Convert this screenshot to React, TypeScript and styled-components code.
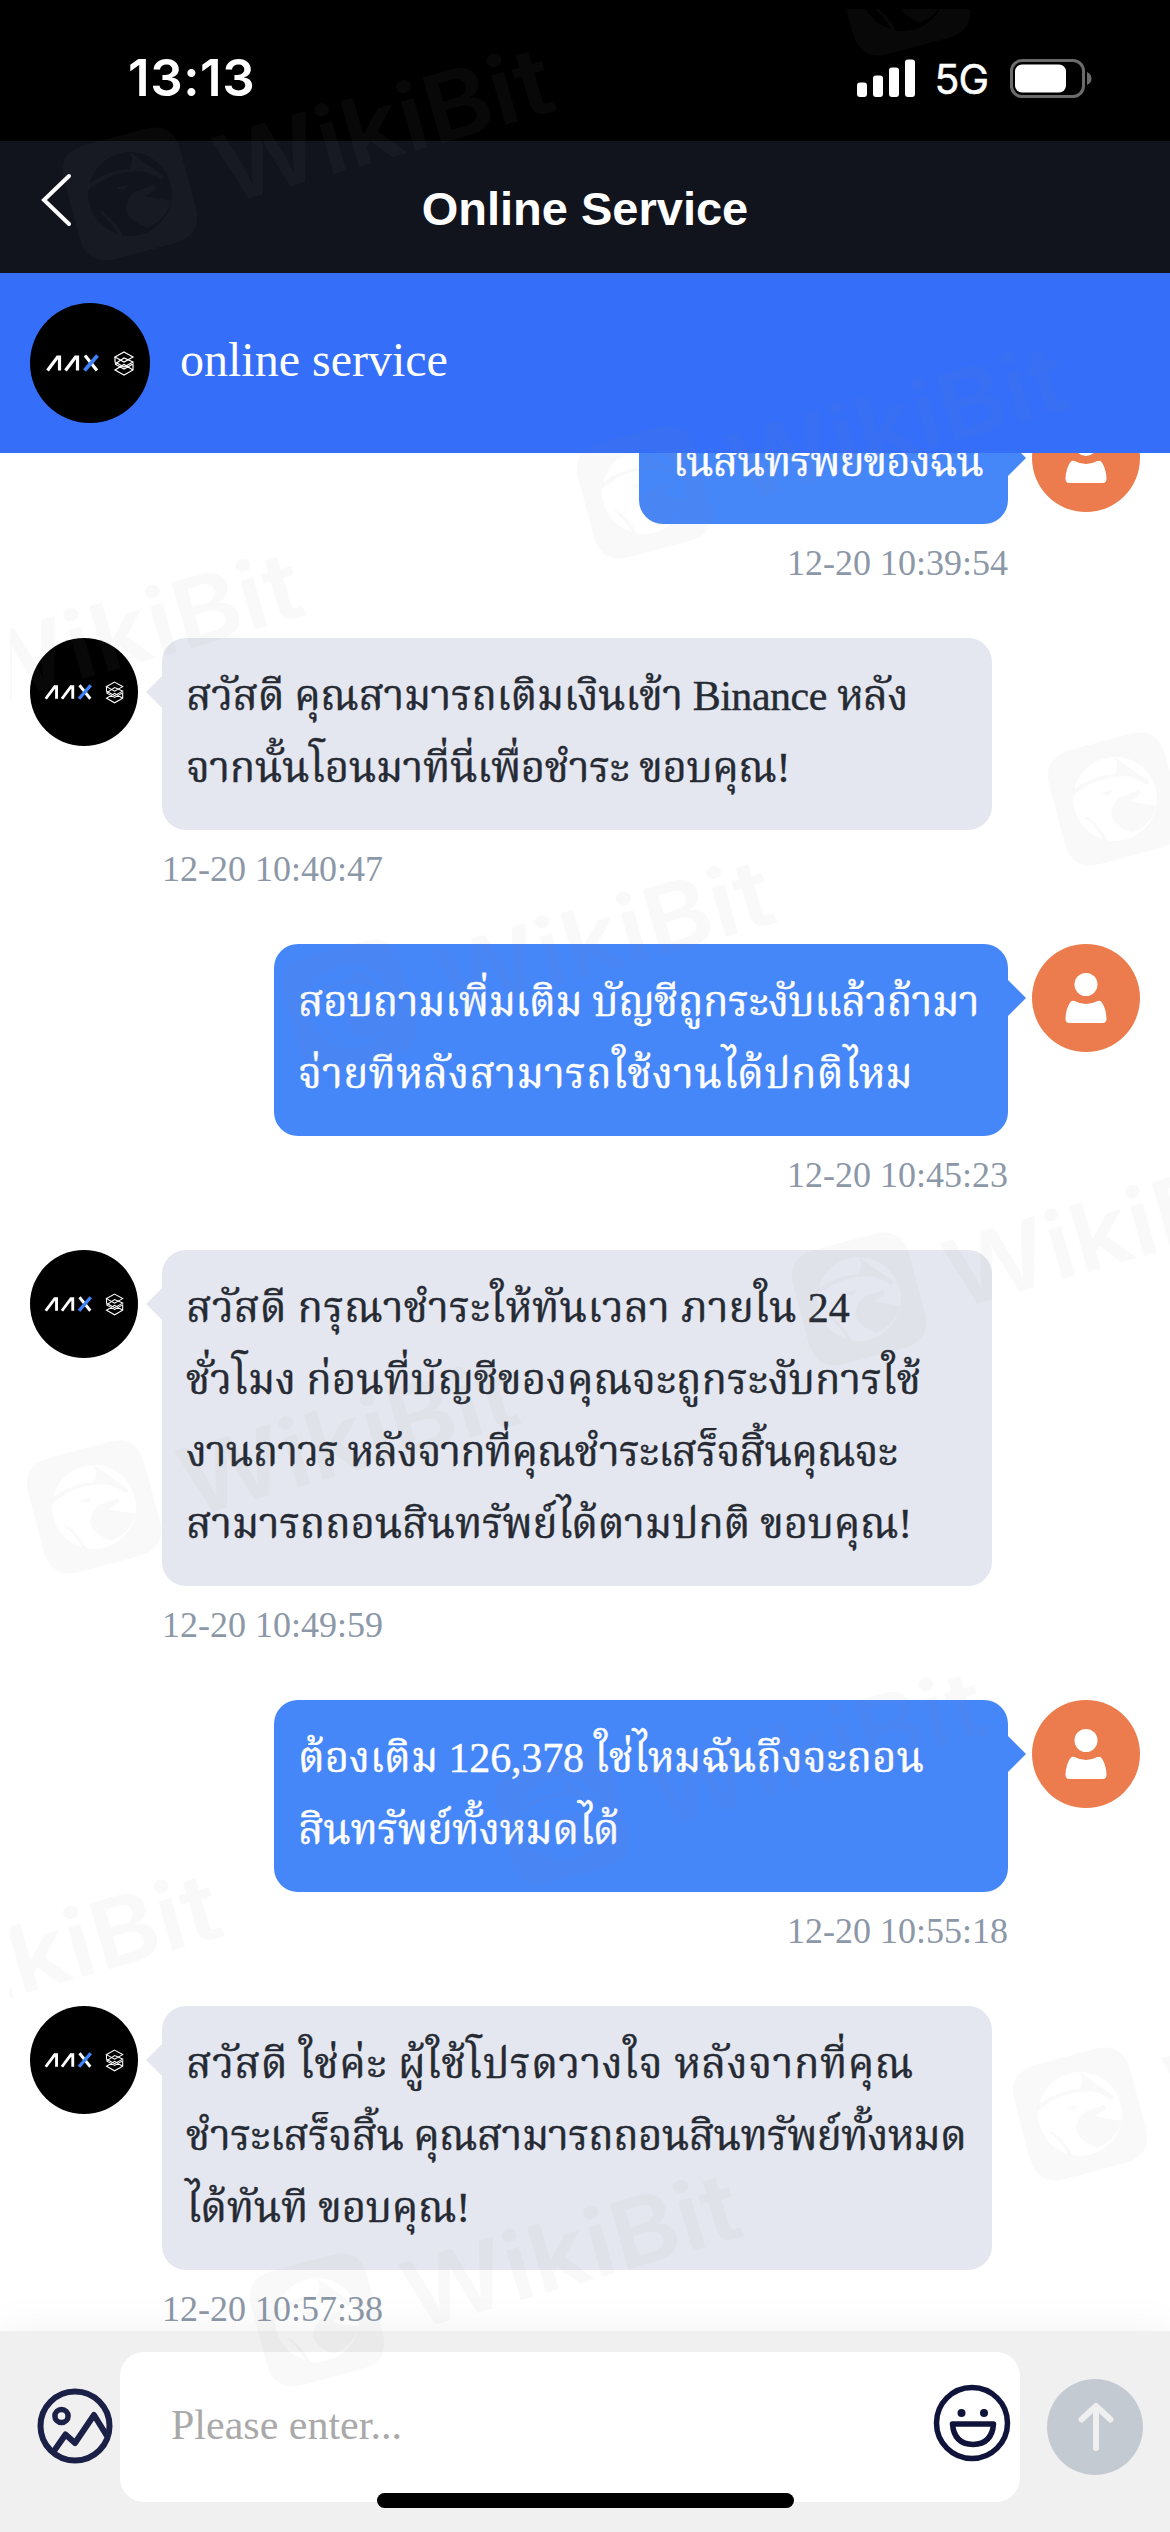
import React, { useLayoutEffect, useRef, useState } from "react";
import styled, { createGlobalStyle, css } from "styled-components";

const serif = `"Liberation Serif", "Times New Roman", "Noto Serif Thai", "Noto Sans Thai", "Loma", serif`;

const GlobalStyle = createGlobalStyle`
  body { margin: 0; background: #fff; }
  * { box-sizing: border-box; }
`;

const Phone = styled.div`
  position: relative;
  display: flex;
  flex-direction: column;
  width: 1170px;
  height: 2532px;
  overflow: hidden;
  background: #fff;
  font-family: ${serif};
`;

const StatusBar = styled.div`
  display: flex;
  flex: none;
  justify-content: space-between;
  align-items: flex-start;
  height: 141px;
  padding: 49px 78px 0 128px;
  background: #000;
  color: #fff;
  font-family: Inter, sans-serif;
`;

const Clock = styled.span`
  font-size: 51px;
  line-height: 58px;
  font-weight: 600;
  letter-spacing: 0.6px;
`;

const Indicators = styled.div`
  display: flex;
  align-items: center;
  height: 58px;
`;

const Network = styled.span`
  margin: 1px 22px 0 19px;
  font-size: 41px;
  line-height: 56px;
  letter-spacing: -1px;
  -webkit-text-stroke: 0.5px currentColor;
`;

const NavBar = styled.header`
  display: grid;
  flex: none;
  grid-template-columns: 120px 1fr 120px;
  align-items: center;
  height: 132px;
  background: #11141d;
  color: #fff;
`;

const BackIcon = styled.svg`
  width: 32px;
  height: 56px;
  margin: -14px 0 0 41px;
`;

const Title = styled.h1`
  margin: 3px 0 0;
  text-align: center;
  font: 700 47px/60px "Liberation Sans", Arial, sans-serif;
`;

const AgentBar = styled.div`
  display: flex;
  flex: none;
  align-items: center;
  gap: 30px;
  height: 180px;
  padding: 0 30px;
  background: #346ef9;
  color: #fff;
  font-size: 48px;
`;

const AgentName = styled.span`
  margin-top: -8px;
`;

const Avatar = styled.div<{ $size: number; $color: string }>`
  display: flex;
  flex: none;
  align-items: center;
  justify-content: center;
  width: ${(p) => p.$size}px;
  height: ${(p) => p.$size}px;
  border-radius: 50%;
  background: ${(p) => p.$color};
`;

const Thread = styled.main`
  display: flex;
  flex: 1;
  flex-direction: column;
  justify-content: flex-end;
  min-height: 0;
  overflow: hidden;
`;

const Messages = styled.div`
  flex: none;
  margin-bottom: -53px;
`;

const Message = styled.article<{ $mine?: boolean }>`
  display: flex;
  flex-direction: ${(p) => (p.$mine ? "row-reverse" : "row")};
  align-items: flex-start;
  gap: 24px;
  padding: 0 30px;
`;

const Column = styled.div<{ $mine?: boolean }>`
  display: flex;
  flex-direction: column;
  align-items: ${(p) => (p.$mine ? "flex-end" : "flex-start")};
`;

const Bubble = styled.div<{ $mine?: boolean; $width: number }>`
  position: relative;
  width: ${(p) => p.$width}px;
  padding: 22px 24px 26px;
  border-radius: 24px;
  background: ${(p) => (p.$mine ? "#4586f9" : "#e4e7ef")};
  color: ${(p) => (p.$mine ? "#fff" : "#262a33")};
  font-size: 42px;
  line-height: 72px;
  -webkit-text-stroke: 0.4px currentColor;
  &::after {
    content: "";
    position: absolute;
    top: 36px;
    border: 18px solid transparent;
    ${(p) =>
      p.$mine
        ? css`right: -36px; border-left-color: #4586f9;`
        : css`left: -34px; border-right-color: #e4e7ef;`}
  }
`;

const Line = styled.div`
  height: 72px;
  white-space: nowrap;
`;

const Time = styled.time`
  height: 114px;
  padding-top: 18px;
  color: #8c98a8;
  font-size: 36px;
  line-height: 42px;
`;

const Composer = styled.footer`
  position: relative;
  display: flex;
  flex: none;
  align-items: flex-start;
  height: 201px;
  padding: 21px 27px 0 36px;
  background: #f0f0f0;
  box-shadow: 0 0 42px rgba(0, 0, 0, 0.06);
`;

const ImageIcon = styled.svg`
  flex: none;
  width: 78px;
  height: 78px;
  margin: 35px 6px 0 0;
`;

const Field = styled.div`
  display: flex;
  flex: none;
  align-items: center;
  justify-content: space-between;
  width: 900px;
  height: 150px;
  padding: 0 8px 0 51px;
  border-radius: 24px;
  background: #fff;
  color: #a9a9a9;
  font-size: 42px;
`;

const Placeholder = styled.span`
  margin-top: -4px;
`;

const FaceIcon = styled.svg`
  width: 80px;
  height: 80px;
  margin-top: -8px;
`;

const Send = styled.div`
  flex: none;
  width: 96px;
  height: 96px;
  margin: 27px 0 0 27px;
  border-radius: 50%;
  background: #c4cad2;
`;

const HomeIndicator = styled.div`
  position: absolute;
  left: 377px;
  bottom: 24px;
  width: 417px;
  height: 15px;
  border-radius: 8px;
  background: #000;
`;

const Watermarks = styled.svg`
  position: absolute;
  inset: 0;
  pointer-events: none;
`;

const StatusIcon = styled.svg`
  flex: none;
  display: block;
`;

const SignalMark = () => (
  <StatusIcon width="58" height="38" viewBox="0 0 58 38" fill="#fff">
    <rect x="0" y="23.500" width="10" height="14.500" rx="3" />
    <rect x="16" y="16.500" width="10" height="21.500" rx="3" />
    <rect x="32" y="8.500" width="10" height="29.500" rx="3" />
    <rect x="48" y="0.500" width="10" height="37.500" rx="3" />
  </StatusIcon>
);

const BatteryMark = () => (
  <StatusIcon width="82" height="39" viewBox="0 0 82 39">
    <rect x="1.500" y="1.500" width="72" height="36" rx="10.500" fill="none" stroke="#6b6b6b" strokeWidth="3" />
    <rect x="5" y="5.500" width="51" height="28" rx="7" fill="#fff" />
    <path d="M77 13q4.500 2 4.500 6.500t-4.500 6.500Z" fill="#6b6b6b" />
  </StatusIcon>
);

const AaxMark = ({ size }: { size: number }) => (
  <svg width={size} height={size} viewBox="0 0 120 120" fill="none">
    <g stroke="#fff" strokeWidth="3.200">
      <path d="M17.500 67.500L27.500 54H29.500V67.500" />
      <path d="M35.500 67.500L45.500 54H47.500V67.500" />
      <path d="M55 52.500L67 67.500" />
      <path d="M54.500 67.500L67.500 52.500" stroke="#3d82f8" strokeWidth="3.800" />
    </g>
    <g stroke="#fff" strokeWidth="1.200">
      <path d="M94 49L103 54L94 59L85 54Z" />
      <path d="M85 54V59L94 64L103 59L94 55L85 61" />
      <path d="M85 61L94 66L103 61V67L94 72L85 67L94 61.500L103 67" />
    </g>
  </svg>
);

const PersonMark = () => (
  <svg width="42" height="52" viewBox="0 0 42 52" fill="#fff">
    <circle cx="21" cy="12.500" r="11.500" />
    <path d="M5.500 30q1.500-2 4-1q11.500 6 23 0q2.500-1 4 1q4.500 6 5 16.500q0 4.500-4 4.500H4.500q-4 0-4-4.500Q1 36 5.500 30Z" />
  </svg>
);

const watermarkCenters = [
  [130, 194], [903, -11], [-121, 699], [644, 492], [350, 1006], [1115, 799],
  [859, 1299], [94, 1507], [562, 1818], [-203, 2020], [317, 2320], [1080, 2114],
];

const Watermark = ({ x, y }: { x: number; y: number }) => (
  <g transform={`translate(${x} ${y}) rotate(-15)`}>
    <path
      fillRule="evenodd"
      d="M-30 -59H30Q60 -59 60 -29V29Q60 59 30 59H-30Q-60 59 -60 29V-29Q-60 -59 -30 -59Z
         M0 -42A42 42 0 1 0 0 42A42 42 0 1 0 0 -42Z"
    />
    <path d="M-38 -20Q-14 -29 6 -24Q14 -32 10 -41L38 -8L34 -5Q24 -19 8 -21Q-14 -26 -40 -14Z" />
    <path d="M6 -1Q18 -1 26 -3V2L14 6Q22 10 38 17Q30 34 8 37Q-6 28 -8 16Q-6 4 6 -1Z" />
    <path d="M-12 -10L0 -9L-5 -5Z" />
    <path d="M-34 10Q-24 24 -22 36L-18 38Q-20 24 -31 10Z" />
    <text
      x="90"
      y="37"
      transform="rotate(-1)"
      textLength="346"
      lengthAdjust="spacingAndGlyphs"
      fontFamily="Inter, sans-serif"
      fontSize="94"
      fontWeight="600"
    >
      WikiBit
    </text>
  </g>
);

/* Tracks a line of text so that it fills the given measure. */
const FittedLine = ({ text, measure, indent = 0 }: { text: string; measure: number; indent?: number }) => {
  const ref = useRef<HTMLSpanElement>(null);
  const [tracking, setTracking] = useState(0);
  useLayoutEffect(() => {
    const el = ref.current;
    if (!el) return;
    el.style.letterSpacing = "0px";
    const natural = el.getBoundingClientRect().width;
    el.style.letterSpacing = "1px";
    const clusters = el.getBoundingClientRect().width - natural;
    const next = clusters > 0 ? (measure - natural) / clusters : 0;
    el.style.letterSpacing = `${next}px`;
    setTracking(next);
  }, [text, measure]);
  return (
    <Line>
      <span ref={ref} style={{ letterSpacing: `${tracking}px`, marginLeft: indent }}>{text}</span>
    </Line>
  );
};

type Entry = { mine: boolean; width: number; time: string; lines: [string, number, number?][] };

const messages: Entry[] = [
  { mine: true, width: 369, time: "12-20 10:39:54", lines: [["ในสินทรัพย์ของฉัน", 311, 9]] },
  { mine: false, width: 830, time: "12-20 10:40:47", lines: [["สวัสดี คุณสามารถเติมเงินเข้า Binance หลัง", 722], ["จากนั้นโอนมาที่นี่เพื่อชำระ ขอบคุณ!", 604]] },
  { mine: true, width: 734, time: "12-20 10:45:23", lines: [["สอบถามเพิ่มเติม บัญชีถูกระงับแล้วถ้ามา", 681], ["จ่ายทีหลังสามารถใช้งานได้ปกติไหม", 615]] },
  { mine: false, width: 830, time: "12-20 10:49:59", lines: [["สวัสดี กรุณาชำระให้ทันเวลา ภายใน 24", 664], ["ชั่วโมง ก่อนที่บัญชีของคุณจะถูกระงับการใช้", 735], ["งานถาวร หลังจากที่คุณชำระเสร็จสิ้นคุณจะ", 711], ["สามารถถอนสินทรัพย์ได้ตามปกติ ขอบคุณ!", 726]] },
  { mine: true, width: 734, time: "12-20 10:55:18", lines: [["ต้องเติม 126,378 ใช่ไหมฉันถึงจะถอน", 626], ["สินทรัพย์ทั้งหมดได้", 321]] },
  { mine: false, width: 830, time: "12-20 10:57:38", lines: [["สวัสดี ใช่ค่ะ ผู้ใช้โปรดวางใจ หลังจากที่คุณ", 728], ["ชำระเสร็จสิ้น คุณสามารถถอนสินทรัพย์ทั้งหมด", 780], ["ได้ทันที ขอบคุณ!", 284]] },
];

export default function App() {
  return (
    <Phone>
      <GlobalStyle />
      <StatusBar>
        <Clock>13:13</Clock>
        <Indicators>
          <SignalMark />
          <Network>5G</Network>
          <BatteryMark />
        </Indicators>
      </StatusBar>
      <NavBar>
        <BackIcon viewBox="0 0 32 56" fill="none" stroke="#fff" strokeWidth="4" strokeLinecap="round">
          <path d="M28 4L3 28L28 52" />
        </BackIcon>
        <Title>Online Service</Title>
      </NavBar>
      <AgentBar>
        <Avatar $size={120} $color="#000"><AaxMark size={120} /></Avatar>
        <AgentName>online service</AgentName>
      </AgentBar>
      <Thread>
        <Messages>
          {messages.map((m) => (
            <Message key={m.time} $mine={m.mine}>
              <Avatar $size={108} $color={m.mine ? "#ec7c4e" : "#000"}>
                {m.mine ? <PersonMark /> : <AaxMark size={108} />}
              </Avatar>
              <Column $mine={m.mine}>
                <Bubble $mine={m.mine} $width={m.width}>
                  {m.lines.map(([text, measure, indent]) => (
                    <FittedLine key={text} text={text} measure={measure} indent={indent} />
                  ))}
                </Bubble>
                <Time>{m.time}</Time>
              </Column>
            </Message>
          ))}
        </Messages>
      </Thread>
      <Composer>
        <ImageIcon viewBox="0 0 78 78" fill="none" stroke="#1b2047" strokeWidth="6" strokeLinejoin="round">
          <circle cx="39" cy="39" r="34.500" />
          <circle cx="25.500" cy="29" r="6.600" strokeWidth="5.500" />
          <path d="M18 64L29.500 47.500L39 56L58 28L71 49" />
        </ImageIcon>
        <Field>
          <Placeholder>Please enter...</Placeholder>
          <FaceIcon viewBox="0 0 80 80" fill="none" stroke="#10143a" strokeWidth="5.500" strokeLinejoin="round">
            <circle cx="40" cy="40" r="35.500" />
            <path d="M20.500 41H61.500Q60 61 41 61.500Q22 61 20.500 41Z" />
            <g fill="#10143a" stroke="none">
              <circle cx="29.500" cy="30" r="4" />
              <circle cx="52" cy="30" r="4" />
            </g>
          </FaceIcon>
        </Field>
        <Send>
          <svg width="96" height="96" viewBox="0 0 96 96" fill="none" stroke="#efefef" strokeWidth="6" strokeLinecap="round" strokeLinejoin="round">
            <path d="M49 27V69M34.500 40.500L49 27L63.500 40.500" />
          </svg>
        </Send>
        <HomeIndicator />
      </Composer>
      <Watermarks width="1170" height="2532" viewBox="0 0 1170 2532" fill="rgba(150,150,150,0.055)">
        <clipPath id="sheet"><rect x="10" y="9" width="1160" height="2523" /></clipPath>
        <g clipPath="url(#sheet)">
          {watermarkCenters.map(([x, y]) => <Watermark key={`${x}-${y}`} x={x} y={y} />)}
        </g>
      </Watermarks>
    </Phone>
  );
}
